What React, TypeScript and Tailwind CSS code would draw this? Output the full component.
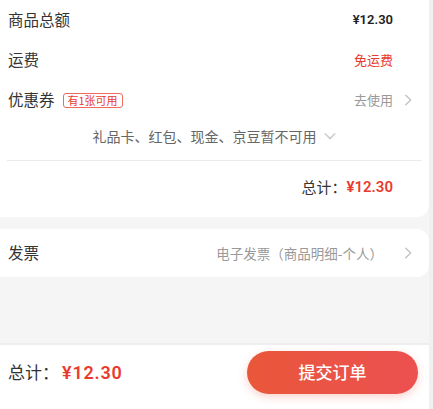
import React from 'react';

const Chevron = ({ className = '' }: { className?: string }) => (
    <svg viewBox="0 0 16 16" className={className} fill="none" stroke="currentColor" strokeWidth="1.7" strokeLinecap="round" strokeLinejoin="round">
        <path d="M5.5 2.5 11 8l-5.5 5.5" />
    </svg>
);

const Row = ({ label, children }: { label: React.ReactNode; children: React.ReactNode }) => (
    <div className="flex h-10 items-center justify-between pl-2 pr-[14px]">
        <div className="flex items-center text-[15.5px] text-[#333]">{label}</div>
        <div className="flex items-center">{children}</div>
    </div>
);

const App = () => {
    return (
        <div className="flex h-[409px] w-[433px] bg-[#f0f0f0]" style={{ fontFamily: '"Noto Sans CJK SC", "Noto Sans", sans-serif' }}>
            <div className="flex w-[429px] flex-col bg-[#f5f5f5]">
                <div className="rounded-br-xl bg-white pb-[4px]">
                    <Row label="商品总额">
                        <span className="text-[13px] font-semibold text-[#222]" style={{ fontFamily: 'Roboto, sans-serif' }}>¥12.30</span>
                        <span className="w-[22px]" />
                    </Row>
                    <Row label="运费">
                        <span className="text-[13px] text-[#e93b2d]">免运费</span>
                        <span className="w-[22px]" />
                    </Row>
                    <Row
                        label={
                            <>
                                优惠券
                                <span className="ml-2 rounded-[3px] border border-[#ee6b5e] px-[4px] text-[11px] leading-[13px] text-[#e93b2d]">有1张可用</span>
                            </>
                        }
                    >
                        <span className="text-[13px] text-[#999]">去使用</span>
                        <Chevron className="ml-[8px] h-[14px] w-[14px] text-[#c4c4c4]" />
                    </Row>
                    <div className="flex h-8 items-center justify-center text-[14px] text-[#666]">
                        礼品卡、红包、现金、京豆暂不可用
                        <svg viewBox="0 0 16 16" className="ml-[6px] h-[14px] w-[14px] text-[#ccc]" fill="none" stroke="currentColor" strokeWidth="1.7" strokeLinecap="round" strokeLinejoin="round">
                            <path d="M2.5 5.5 8 11l5.5-5.5" />
                        </svg>
                    </div>
                    <div className="mx-[7px] mt-[8px] h-px bg-[#ebebeb]" />
                    <div className="flex h-[52px] items-center justify-end pr-9">
                        <span className="text-[15px] text-[#333]">总计：</span>
                        <span className="text-[15px] font-semibold text-[#e93b2d]" style={{ fontFamily: 'Roboto, sans-serif' }}>¥12.30</span>
                    </div>
                </div>
                <div className="mt-3 flex h-12 items-center justify-between rounded-r-xl bg-white pl-2 pr-[14px]">
                    <span className="text-[15.5px] text-[#333]">发票</span>
                    <div className="flex items-center">
                        <span className="text-[13.5px] text-[#999]">电子发票（商品明细-个人）</span>
                        <Chevron className="ml-[18px] h-[14px] w-[14px] text-[#c4c4c4]" />
                    </div>
                </div>
                <div className="flex-1" />
                <div className="h-[66px] border-t-2 border-[#eeeeee] bg-white pl-2 pr-[11px] pt-[5px]">
                    <div className="flex h-[44px] items-center justify-between">
                        <div className="flex items-baseline">
                            <span className="text-[17px] text-[#333]">总计：</span>
                            <span className="ml-[3px] text-[18px] font-semibold tracking-[0.8px] text-[#e93b2d]" style={{ fontFamily: 'Roboto, sans-serif' }}>¥12.30</span>
                        </div>
                        <button className="h-[43px] w-[171px] rounded-full bg-gradient-to-r from-[#e9573a] to-[#ec5050] text-[17px] font-medium text-white shadow-[0_3px_8px_rgba(233,80,60,0.25)]">
                            提交订单
                        </button>
                    </div>
                </div>
            </div>
        </div>
    );
};

export default App;
